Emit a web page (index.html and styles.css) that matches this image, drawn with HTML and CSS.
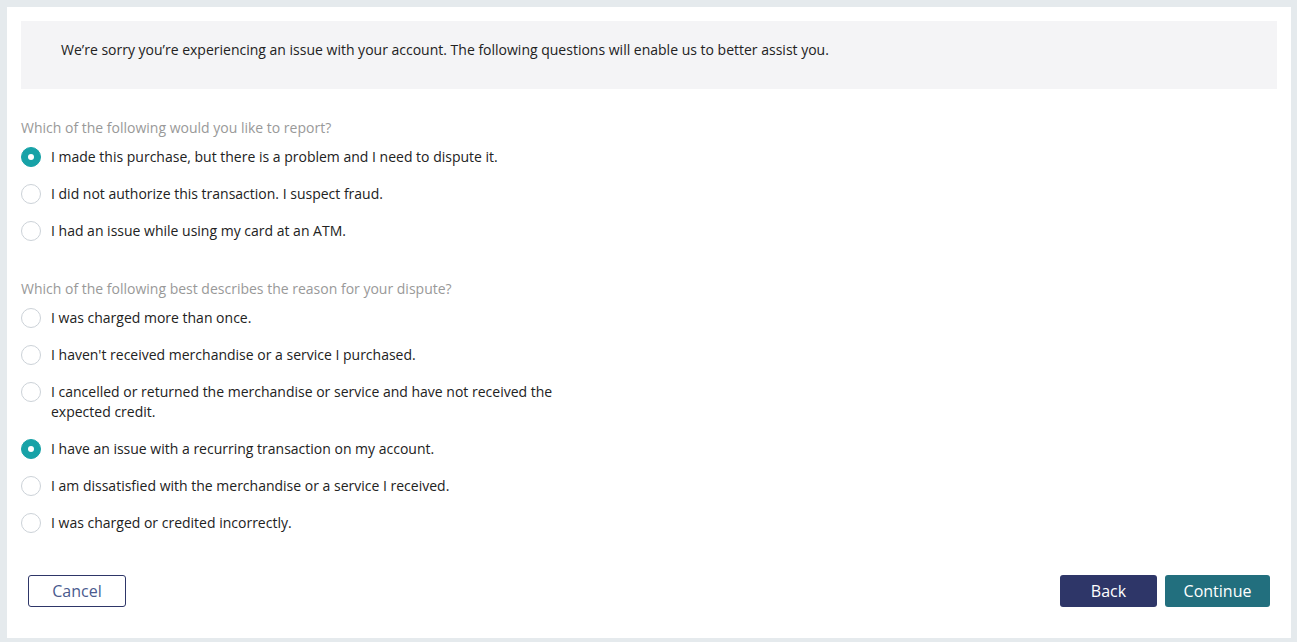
FILE: index.html
```html
<!DOCTYPE html>
<html>
<head>
<meta charset="utf-8">
<link rel="stylesheet" href="styles.css">
</head>
<body>
<div class="panel">
  <div class="notice">We’re sorry you’re experiencing an issue with your account. The following questions will enable us to better assist you.</div>
  <div class="question">
    <div class="qlabel">Which of the following would you like to report?</div>
    <label class="opt"><span class="radio checked"></span><span class="otext">I made this purchase, but there is a problem and I need to dispute it.</span></label>
    <label class="opt"><span class="radio"></span><span class="otext">I did not authorize this transaction. I suspect fraud.</span></label>
    <label class="opt"><span class="radio"></span><span class="otext">I had an issue while using my card at an ATM.</span></label>
  </div>
  <div class="question q2">
    <div class="qlabel">Which of the following best describes the reason for your dispute?</div>
    <label class="opt"><span class="radio"></span><span class="otext">I was charged more than once.</span></label>
    <label class="opt"><span class="radio"></span><span class="otext">I haven't received merchandise or a service I purchased.</span></label>
    <label class="opt"><span class="radio"></span><span class="otext">I cancelled or returned the merchandise or service and have not received the expected credit.</span></label>
    <label class="opt"><span class="radio checked"></span><span class="otext">I have an issue with a recurring transaction on my account.</span></label>
    <label class="opt"><span class="radio"></span><span class="otext">I am dissatisfied with the merchandise or a service I received.</span></label>
    <label class="opt"><span class="radio"></span><span class="otext">I was charged or credited incorrectly.</span></label>
  </div>
  <div class="actions">
    <button class="btn cancel">Cancel</button>
    <div class="right">
      <button class="btn back">Back</button>
      <button class="btn continue">Continue</button>
    </div>
  </div>
</div>
</body>
</html>
```
FILE: styles.css
```css
html, body {
  margin: 0;
  padding: 0;
}
body {
  background: #e5eaed;
  font-family: "Open Sans", "Liberation Sans", sans-serif;
  color: #222;
  padding: 7px 6px 4px 7px;
}
.panel {
  background: #fff;
  padding: 14px 14px 31px 14px;
  min-height: 631px;
  box-sizing: border-box;
}
.notice {
  background: #f4f4f6;
  height: 68px;
  box-sizing: border-box;
  padding: 19px 40px;
  font-size: 14px;
  line-height: 20px;
}
.question {
  margin-top: 30px;
}
.q2 {
  margin-top: 39px;
}
.qlabel {
  font-size: 14px;
  color: #999;
  line-height: 18px;
}
.opt {
  display: flex;
  align-items: flex-start;
  gap: 10px;
  max-width: 545px;
  margin-top: 17px;
  font-size: 14px;
  line-height: 20px;
  cursor: pointer;
}
.qlabel + .opt {
  margin-top: 10px;
}
.radio {
  flex: none;
  width: 18px;
  height: 18px;
  border: 1px solid #ccd2d8;
  border-radius: 50%;
  position: relative;
  background: #fff;
}
.radio.checked {
  background: #17a2a7;
  border-color: #17a2a7;
}
.radio.checked::after {
  content: "";
  position: absolute;
  width: 6px;
  height: 6px;
  border-radius: 50%;
  background: #fff;
  left: 6px;
  top: 6px;
}
.actions {
  display: flex;
  justify-content: space-between;
  align-items: center;
  margin-top: 42px;
  padding: 0 7px;
}
.right {
  display: flex;
  gap: 8px;
}
.btn {
  font-family: "Open Sans", "Liberation Sans", sans-serif;
  font-size: 16px;
  height: 32px;
  border-radius: 3px;
  padding: 0;
  cursor: pointer;
}
.cancel {
  width: 98px;
  background: #fff;
  border: 1px solid #2e3668;
  color: #4a5a8e;
}
.back {
  width: 97px;
  background: #2e3668;
  border: none;
  color: #fff;
}
.continue {
  width: 105px;
  background: #226f7e;
  border: none;
  color: #fff;
}
```
